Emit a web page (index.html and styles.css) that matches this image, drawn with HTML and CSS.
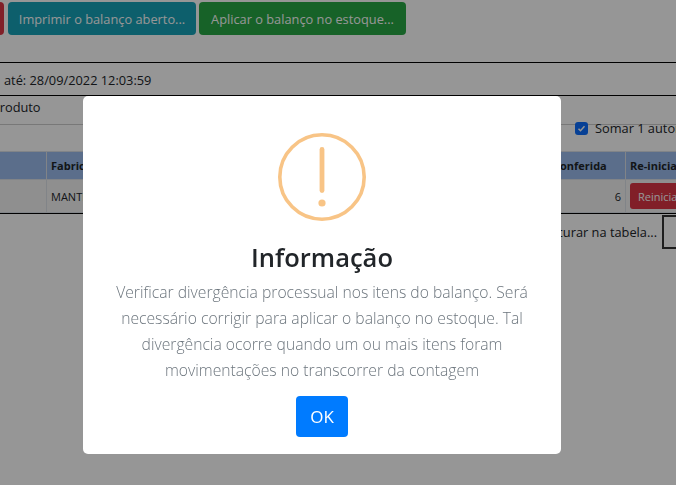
FILE: index.html
```html
<!DOCTYPE html>
<html lang="pt-BR">
<head>
    <meta charset="UTF-8">
    <title>Balanço</title>
    <link rel="stylesheet" href="styles.css">
</head>
<body>
    <div class="page">
        <div class="toolbar">
            <button class="btn btn-red"></button>
            <button class="btn btn-teal">Imprimir o balanço aberto...</button>
            <button class="btn btn-green">Aplicar o balanço no estoque...</button>
        </div>
        <div class="period">até: 28/09/2022 12:03:59</div>
        <div class="search-row">
            <div class="product-label">Produto</div>
            <label class="auto-sum"><span class="check"><svg width="9" height="9" viewBox="0 0 9 9"><path d="M1.5 4.7l2 2 4-4.4" fill="none" stroke="#fff" stroke-width="1.5"/></svg></span>Somar 1 automaticamente</label>
        </div>
        <table class="items">
            <tr>
                <th class="col-code"></th>
                <th class="col-maker">Fabricante</th>
                <th class="col-counted">Conferida</th>
                <th class="col-reset">Re-iniciar</th>
            </tr>
            <tr>
                <td></td>
                <td>MANTECORP</td>
                <td class="num">6</td>
                <td><button class="btn-reset">Reiniciar</button></td>
            </tr>
        </table>
        <div class="table-footer">
            <span class="table-search-label">Procurar na tabela...</span>
            <div class="table-search"></div>
        </div>
    </div>

    <div class="overlay">
        <div class="dialog">
            <svg class="warn-icon" width="88" height="88" viewBox="0 0 88 88">
                <circle cx="44" cy="44" r="42.2" fill="none" stroke="#f8c486" stroke-width="3.6"/>
                <rect x="41.6" y="14" width="4.8" height="46" rx="2.4" fill="#f8c486"/>
                <circle cx="44" cy="70" r="3.6" fill="#f8c486"/>
            </svg>
            <h2 class="dialog-title">Informação</h2>
            <p class="dialog-text">Verificar divergência processual nos itens do balanço. Será necessário corrigir para aplicar o balanço no estoque. Tal divergência ocorre quando um ou mais itens foram movimentações no transcorrer da contagem</p>
            <button class="btn-ok">OK</button>
        </div>
    </div>
</body>
</html>
```

FILE: styles.css
```css
body {
    margin: 0;
    width: 676px;
    height: 485px;
    overflow: hidden;
    font-family: "Open Sans", "Noto Sans", sans-serif;
    font-size: 12.8px;
    color: #212529;
    background-color: #fff;
}

.page {
    width: 800px;
    margin-left: -50px;
}

.toolbar {
    display: flex;
    gap: 3px;
    height: 33px;
    padding-top: 2px;
    margin-bottom: 27px;
}

.btn {
    border: 0;
    border-radius: 4px;
    color: #fff;
    font-family: inherit;
    font-size: 12.8px;
    padding: 0;
}

.btn-red {
    width: 54px;
    margin-right: 1px;
    background-color: #dc3545;
}

.btn-teal {
    width: 188px;
    background-color: #17a2b8;
}

.btn-green {
    width: 207px;
    background-color: #28a745;
}

.period {
    height: 32px;
    line-height: 34px;
    padding-left: 54px;
    border-top: 1px solid #000;
    border-bottom: 1px solid #000;
}

.search-row {
    position: relative;
    height: 55px;
}

.product-label {
    padding: 2px 0 0 42px;
    height: 26px;
    line-height: 18px;
    border-bottom: 1px solid #ccc;
}

.auto-sum {
    position: absolute;
    left: 625px;
    top: 23px;
    display: flex;
    align-items: center;
    gap: 7px;
    white-space: nowrap;
}

.check {
    display: flex;
    align-items: center;
    justify-content: center;
    width: 13px;
    height: 13px;
    border-radius: 3px;
    background-color: #0d6efd;
}

.items {
    width: 800px;
    table-layout: fixed;
    border-collapse: separate;
    border-spacing: 1px;
    border-bottom: 1px solid #000;
    background-color: #dbe1e8;
}

.items th {
    height: 27px;
    padding: 0 4px;
    text-align: left;
    font-size: 11px;
    background-color: #9bbcec;
}

.items td {
    height: 32px;
    padding: 0 4px;
    font-size: 11px;
    background-color: #f4f4f4;
}

.col-code {
    width: 87px;
}

.col-counted {
    width: 68px;
}

.col-reset {
    width: 115px;
}

.items td.num {
    text-align: right;
}

.btn-reset {
    border: 0;
    border-radius: 3px;
    width: 70px;
    height: 26px;
    padding: 0 0 0 8px;
    text-align: left;
    color: #fff;
    font-family: inherit;
    font-size: 11px;
    background-color: #dc3545;
}

.table-footer {
    display: flex;
    justify-content: flex-end;
    gap: 5px;
    padding: 1px 0 0;
    width: 800px;
}

.table-search-label {
    padding-top: 8px;
}

.table-search {
    width: 88px;
    height: 34px;
    border: 2px solid #333;
    box-sizing: border-box;
}

.overlay {
    position: fixed;
    inset: 0;
    padding: 96px 0 0 83px;
    background-color: rgba(0, 0, 0, 0.41);
}

.dialog {
    display: flex;
    flex-direction: column;
    align-items: center;
    box-sizing: border-box;
    width: 478px;
    height: 358px;
    padding-top: 37px;
    border-radius: 5px;
    background-color: #fff;
}

.warn-icon {
    display: block;
}

.dialog-title {
    margin: 18px 0 0;
    height: 36px;
    line-height: 36px;
    font-size: 25.5px;
    font-weight: 600;
}

.dialog-text {
    margin: 4px 0 0;
    padding: 0 30px;
    text-align: center;
    font-size: 15.7px;
    font-weight: 300;
    line-height: 26px;
    color: #6c757d;
}

.btn-ok {
    width: 52px;
    height: 41px;
    margin-top: 13px;
    border: 0;
    border-radius: 4px;
    color: #fff;
    font-family: inherit;
    font-size: 17px;
    background-color: #007bff;
}
```
